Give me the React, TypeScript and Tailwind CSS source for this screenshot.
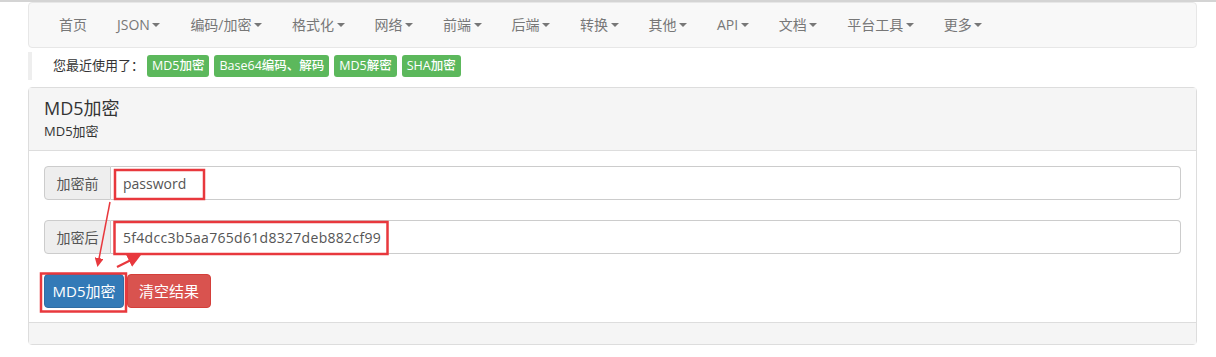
import React from "react";

const navItems = [
  { label: "首页", caret: false },
  { label: "JSON", caret: true },
  { label: "编码/加密", caret: true },
  { label: "格式化", caret: true },
  { label: "网络", caret: true },
  { label: "前端", caret: true },
  { label: "后端", caret: true },
  { label: "转换", caret: true },
  { label: "其他", caret: true },
  { label: "API", caret: true },
  { label: "文档", caret: true },
  { label: "平台工具", caret: true },
  { label: "更多", caret: true },
];

const recent = ["MD5加密", "Base64编码、解码", "MD5解密", "SHA加密"];

const Caret = () => (
  <span className="ml-[2.5px] inline-block h-0 w-0 border-x-[4px] border-t-[4px] border-x-transparent border-t-[#777] align-middle" />
);

const Annotations = () => (
  <svg
    className="pointer-events-none absolute left-0 top-0"
    width={1216}
    height={357}
    viewBox="0 0 1216 357"
  >
    <defs>
      <marker id="head" markerWidth="6" markerHeight="6" refX="4" refY="3" orient="auto">
        <path d="M0,0 L6,3 L0,6 z" fill="#e8383d" />
      </marker>
    </defs>
    <rect x="115" y="168" width="89" height="29" fill="none" stroke="#e8383d" strokeWidth="2.5" />
    <rect x="114.5" y="220" width="273" height="32" fill="none" stroke="#e8383d" strokeWidth="2.5" />
    <rect x="41" y="271.5" width="85" height="38" fill="none" stroke="#e8383d" strokeWidth="2.5" />
    <line x1="110" y1="200" x2="98" y2="262" stroke="#e8383d" strokeWidth="1.5" markerEnd="url(#head)" />
    <line x1="117" y1="265" x2="137" y2="255" stroke="#e8383d" strokeWidth="2.2" markerEnd="url(#head)" />
  </svg>
);

export default function App() {
  return (
    <div
      className="relative h-[357px] w-[1216px] overflow-hidden border-t-2 border-[#d4d4d4] bg-white text-[14px] text-[#333]"
      style={{ fontFamily: '"Open Sans", "Noto Sans CJK SC", sans-serif' }}
    >
      <div className="pl-[28px] pr-[19px]">
        <nav className="flex h-[46px] items-center rounded-[4px] border border-[#e7e7e7] bg-[#f8f8f8] pl-[15px]">
          {navItems.map((item) => (
            <span key={item.label} className="flex items-center px-[15px] leading-[20px] text-[#777]">
              {item.label}
              {item.caret && <Caret />}
            </span>
          ))}
        </nav>

        <div className="mt-[4px] flex h-[28px] items-center border-l-4 border-[#eee] pl-[21px] text-[13px]">
          <span>您最近使用了：</span>
          <div className="ml-[3px] flex gap-[5px]">
            {recent.map((r) => (
              <span
                key={r}
                className="flex h-[22px] items-center rounded-[3px] bg-[#5cb85c] px-[5px] text-[12.5px] font-medium leading-none text-white"
              >
                {r}
              </span>
            ))}
          </div>
        </div>

        <div className="mt-[7px] rounded-[4px] border border-[#ddd]">
          <div className="h-[63px] border-b border-[#ddd] bg-[#f5f5f5] px-[15px] pt-[8px]">
            <div className="text-[18px] leading-[24px]">MD5加密</div>
            <div className="mt-[2px] text-[13px] leading-[18px]">MD5加密</div>
          </div>
          <div className="px-[15px] pb-[14px] pt-[15px]">
            <div className="flex h-[34px]">
              <span className="flex w-[67px] items-center justify-center rounded-l-[4px] border border-[#ccc] bg-[#eee] text-[#555]">
                加密前
              </span>
              <div className="flex flex-1 items-center rounded-r-[4px] border border-l-0 border-[#ccc] px-[12px] text-[#555]">
                password
              </div>
            </div>
            <div className="mt-[20px] flex h-[34px]">
              <span className="flex w-[67px] items-center justify-center rounded-l-[4px] border border-[#ccc] bg-[#eee] text-[#555]">
                加密后
              </span>
              <div className="flex flex-1 items-center rounded-r-[4px] border border-l-0 border-[#ccc] px-[12px] tracking-[0.3px] text-[#555]">
                5f4dcc3b5aa765d61d8327deb882cf99
              </div>
            </div>
            <div className="mt-[20px] flex gap-[3px]">
              <button className="h-[34px] w-[80px] rounded-[4px] border border-[#2e6da4] bg-[#337ab7] text-[15px] text-white">
                MD5加密
              </button>
              <button className="h-[34px] w-[84px] rounded-[4px] border border-[#d43f3a] bg-[#d9534f] text-[15px] text-white">
                清空结果
              </button>
            </div>
          </div>
          <div className="h-[22px] border-t border-[#ddd] bg-[#f5f5f5]" />
        </div>
      </div>
      <Annotations />
    </div>
  );
}
